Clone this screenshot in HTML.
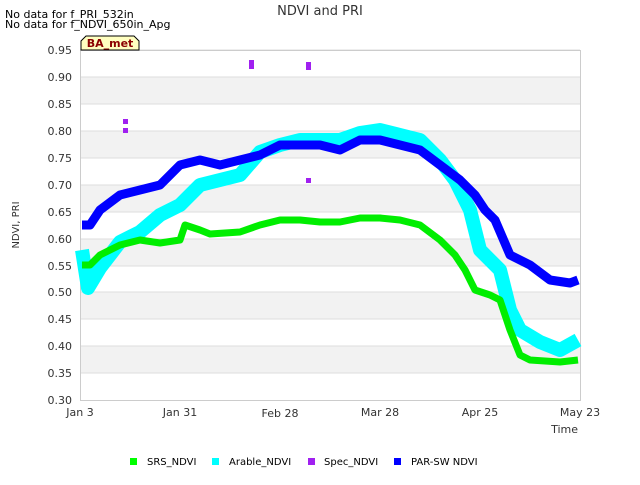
<!DOCTYPE html>
<html><head><meta charset="utf-8"><style>
body{margin:0;background:#fff;}
svg text{font-family:"DejaVu Sans","Liberation Sans",sans-serif;}
</style></head><body>
<svg width="640" height="480" xmlns="http://www.w3.org/2000/svg">
<rect width="640" height="480" fill="#fff"/>
<text x="320" y="15" font-size="13" text-anchor="middle" fill="#333">NDVI and PRI</text>
<text x="5" y="18" font-size="11" fill="#000">No data for f_PRI_532in</text>
<text x="5" y="28" font-size="11" fill="#000">No data for f_NDVI_650in_Apg</text>
<g fill="#f2f2f2">
<rect x="80" y="77" width="500" height="27"/>
<rect x="80" y="131" width="500" height="27"/>
<rect x="80" y="185" width="500" height="27"/>
<rect x="80" y="239" width="500" height="27"/>
<rect x="80" y="292" width="500" height="27"/>
<rect x="80" y="346" width="500" height="27"/>
</g>
<g stroke="#ddd" stroke-width="1">
<line x1="80" y1="50" x2="580" y2="50"/><line x1="80" y1="77" x2="580" y2="77"/>
<line x1="80" y1="104" x2="580" y2="104"/><line x1="80" y1="131" x2="580" y2="131"/>
<line x1="80" y1="158" x2="580" y2="158"/><line x1="80" y1="185" x2="580" y2="185"/>
<line x1="80" y1="212" x2="580" y2="212"/><line x1="80" y1="239" x2="580" y2="239"/>
<line x1="80" y1="266" x2="580" y2="266"/><line x1="80" y1="292" x2="580" y2="292"/>
<line x1="80" y1="319" x2="580" y2="319"/><line x1="80" y1="346" x2="580" y2="346"/>
<line x1="80" y1="373" x2="580" y2="373"/>
</g>
<rect x="80.5" y="50.5" width="500" height="350" fill="none" stroke="#ccc"/>
<g font-size="11" fill="#333" text-anchor="end">
<text x="72" y="54">0.95</text><text x="72" y="81">0.90</text><text x="72" y="108">0.85</text>
<text x="72" y="135">0.80</text><text x="72" y="162">0.75</text><text x="72" y="189">0.70</text>
<text x="72" y="216">0.65</text><text x="72" y="243">0.60</text><text x="72" y="270">0.55</text>
<text x="72" y="296">0.50</text><text x="72" y="323">0.45</text><text x="72" y="350">0.40</text>
<text x="72" y="377">0.35</text><text x="72" y="404">0.30</text>
</g>
<g font-size="11" fill="#333" text-anchor="middle">
<text x="80" y="416">Jan 3</text><text x="180" y="416">Jan 31</text><text x="280" y="417">Feb 28</text>
<text x="380" y="416">Mar 28</text><text x="480" y="416">Apr 25</text><text x="580" y="416">May 23</text>
</g>
<text x="578" y="433" font-size="11" fill="#333" text-anchor="end">Time</text>
<text x="19" y="225" font-size="10" fill="#333" text-anchor="middle" transform="rotate(-90 19 225)">NDVI, PRI</text>
<g fill="none" stroke-linejoin="round">
<polyline stroke="#00ffff" stroke-width="14" points="82,250 88,288 100,268 120,242 140,232 160,215 180,205 200,185 220,180 240,175 260,152 280,145 300,140 320,140 340,140 360,133 380,130 400,135 420,140 440,160 455,180 470,210 480,250 500,270 510,310 520,330 540,342 560,350 578,340"/>
<polyline stroke="#00ee00" stroke-width="7" points="82,265 90,265 100,255 110,250 120,245 140,240 160,243 180,240 185,225 200,230 210,234 240,232 260,225 280,220 300,220 320,222 340,222 360,218 380,218 400,220 420,225 440,240 455,255 465,270 475,290 490,295 500,300 510,330 520,355 530,360 560,362 578,360"/>
<polyline stroke="#0000ff" stroke-width="9" points="82,225 90,225 100,210 120,195 140,190 160,185 180,165 200,160 220,165 240,160 260,155 280,145 300,145 320,145 340,150 360,140 380,140 400,145 420,150 440,165 460,180 475,195 485,210 495,220 510,255 530,265 550,280 570,283 578,280"/>
</g>
<g fill="#a020f0">
<rect x="123" y="119" width="5" height="5"/><rect x="123" y="128" width="5" height="5"/>
<rect x="249" y="60" width="5" height="9"/><rect x="306" y="62" width="5" height="8"/>
<rect x="306" y="178" width="5" height="5"/>
</g>
<path d="M81,50 L81,41 L86,36 L134,36 L139,41 L139,50 Z" fill="#ffffc0" stroke="#000" stroke-width="1"/>
<text x="110" y="47" font-size="11" font-weight="bold" fill="#8b0000" text-anchor="middle">BA_met</text>
<g font-size="10" fill="#000">
<rect x="130" y="458" width="7" height="7" fill="#00ff00"/><text x="147" y="465">SRS_NDVI</text>
<rect x="212" y="458" width="7" height="7" fill="#00ffff"/><text x="229" y="465">Arable_NDVI</text>
<rect x="308" y="458" width="7" height="7" fill="#a020f0"/><text x="324" y="465">Spec_NDVI</text>
<rect x="394" y="458" width="7" height="7" fill="#0000ff"/><text x="411" y="465">PAR-SW NDVI</text>
</g>
</svg>
</body></html>
